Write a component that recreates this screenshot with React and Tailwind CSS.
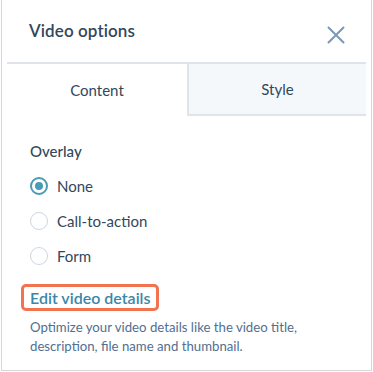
export default function App() {
  return (
    <div className="w-[373px] h-[372px] bg-white" style={{ fontFamily: "Lato, 'Noto Sans', sans-serif" }}>
      <div className="ml-[1px] w-[371px] h-[371px] border-l border-r border-b border-[#d6d6d6] flex flex-col">
        <div className="h-[62px] flex items-center justify-between pl-[27px] pr-[26px]">
          <span className="text-[17px] font-semibold text-[#33475b] tracking-[0.1px]">Video options</span>
          <svg width="18" height="18" viewBox="0 0 18 18" className="mt-[8px]">
            <path d="M1.5 1.5 L16.5 16.5 M16.5 1.5 L1.5 16.5" stroke="#7c98b6" strokeWidth="2" strokeLinecap="round" />
          </svg>
        </div>
        <div className="mx-[5px] flex border-t-2 border-[#dfe3eb] h-[54px]">
          <div className="w-[180px] flex items-center justify-center text-[15px] text-[#33475b]">Content</div>
          <div className="flex-1 flex items-center justify-center text-[15px] text-[#33475b] bg-[#f5f8fa] border-l-2 border-b-2 border-[#dfe3eb]">Style</div>
        </div>
        <div className="pl-[28px] pt-[23px] flex flex-col">
          <div className="text-[15px] text-[#33475b] h-[24px] flex items-center font-medium">Overlay</div>
          <div className="mt-[14px] flex flex-col gap-[17px]">
            <label className="flex items-center h-[18px]">
              <span className="w-[18px] h-[18px] rounded-full border-2 border-[#4b9ab6] flex items-center justify-center">
                <span className="w-[8px] h-[8px] rounded-full bg-[#4b9ab6]" />
              </span>
              <span className="ml-[9px] text-[15px] text-[#33475b]">None</span>
            </label>
            <label className="flex items-center h-[18px]">
              <span className="w-[18px] h-[18px] rounded-full border border-[#cbd6e2]" />
              <span className="ml-[9px] text-[15px] text-[#33475b]">Call-to-action</span>
            </label>
            <label className="flex items-center h-[18px]">
              <span className="w-[18px] h-[18px] rounded-full border border-[#cbd6e2]" />
              <span className="ml-[9px] text-[15px] text-[#33475b]">Form</span>
            </label>
          </div>
          <div className="mt-[19px] -ml-[9px] self-start border-[3px] border-[#f2734f] rounded-[5px] px-[6px] h-[27px] flex items-center">
            <span className="text-[16px] font-semibold text-[#3a87a8]">Edit video details</span>
          </div>
          <div className="mt-[7px] text-[13.2px] leading-[19px] text-[#516f90] pr-[20px]">
            Optimize your video details like the video title,<br />description, file name and thumbnail.
          </div>
        </div>
      </div>
    </div>
  );
}
